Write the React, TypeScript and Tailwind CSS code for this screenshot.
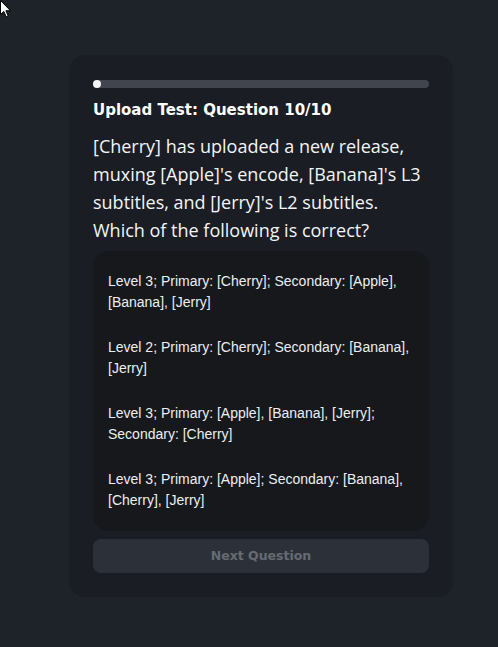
const options = [
  "Level 3; Primary: [Cherry]; Secondary: [Apple], [Banana], [Jerry]",
  "Level 2; Primary: [Cherry]; Secondary: [Banana], [Jerry]",
  "Level 3; Primary: [Apple], [Banana], [Jerry]; Secondary: [Cherry]",
  "Level 3; Primary: [Apple]; Secondary: [Banana], [Cherry], [Jerry]",
];

function Cursor() {
  return (
    <svg className="absolute left-0 top-0" width="12" height="18" viewBox="0 0 12 18">
      <path d="M0.5 0.5 L0.5 14.5 L3.8 11.4 L6.2 16.8 L8.2 15.9 L5.9 10.7 L10.5 10.7 Z" fill="#fff" stroke="#000" strokeWidth="1" />
    </svg>
  );
}

export default function App() {
  return (
    <div className="relative min-h-screen bg-[#1e2229] pt-[55px] pl-[69px] font-['Liberation_Sans',sans-serif]">
      <Cursor />
      <div className="w-[384px] rounded-2xl bg-[#1a1d23] px-6 pt-[25px] pb-6">
        {/* progress */}
        <div className="h-2 w-full rounded-full bg-[#41454d]">
          <div className="h-2 w-2 rounded-full bg-[#f3f4f6]" />
        </div>

        <h2 className="mt-[10px] text-[15px] leading-6 font-bold text-white font-['DejaVu_Sans',sans-serif]">
          Upload Test: Question 10/10
        </h2>

        <p className="mt-[10px] text-[18px] leading-7 text-[#f3f4f6] font-['Open_Sans',sans-serif]">
          [Cherry] has uploaded a new release, muxing [Apple]'s encode, [Banana]'s L3 subtitles, and [Jerry]'s L2
          subtitles. Which of the following is correct?
        </p>

        <div className="mt-[7px] flex flex-col gap-6 rounded-2xl bg-[#16181c] px-[15px] py-5">
          {options.map((o) => (
            <button key={o} className="text-left text-[14px] leading-[21px] text-[#eceef1]">
              {o}
            </button>
          ))}
        </div>

        <button
          disabled
          className="mt-2 flex h-[34px] w-full items-center justify-center rounded-lg bg-[#2c3139] text-[12.5px] font-bold text-[#666b74] font-['DejaVu_Sans',sans-serif]"
        >
          Next Question
        </button>
      </div>
    </div>
  );
}
